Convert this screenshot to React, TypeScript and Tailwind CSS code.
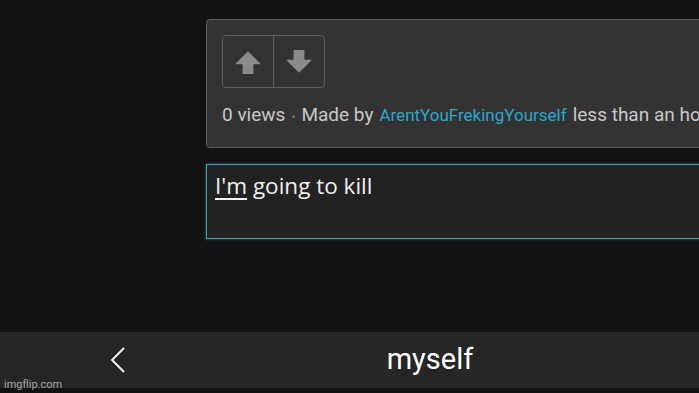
export default function App() {
  return (
    <div className="relative flex h-[393px] w-[699px] flex-col overflow-hidden bg-[#121212] font-['Roboto',sans-serif]">
      <div className="flex flex-col pl-[206px] pt-[19px]">
        {/* post meta card */}
        <div className="h-[129px] w-[540px] shrink-0 overflow-hidden rounded-[4px] border border-[#5b5b5b] bg-[#333333] pl-[15px] pt-[15px]">
          <div className="flex h-[53px] w-[103px] rounded-[4px] border border-[#5e5e5e]">
            <div className="flex w-[51px] items-center justify-center border-r border-[#5e5e5e]">
              <svg width="26" height="26" viewBox="0 0 24 24">
                <path d="M12 2 L24 14 H17 V23 H7 V14 H0 Z" fill="#8a8a8a" />
              </svg>
            </div>
            <div className="flex flex-1 items-center justify-center">
              <svg width="26" height="26" viewBox="0 0 24 24">
                <path d="M12 22 L24 10 H17 V1 H7 V10 H0 Z" fill="#8a8a8a" />
              </svg>
            </div>
          </div>
          <div className="mt-[13px] flex items-baseline whitespace-nowrap text-[19px] text-[#c8c8c8]">
            <span>0 views</span>
            <span className="mx-[6px] text-[12px] text-[#777]">•</span>
            <span>Made by</span>
            <span className="ml-[6px] text-[17px] text-[#2ea7c9]">ArentYouFrekingYourself</span>
            <span className="ml-[6px]">less than an hour ago</span>
          </div>
        </div>

        {/* caption input */}
        <div className="mt-[16px] h-[75px] w-[540px] shrink-0 border border-[#4aa2b8] bg-[#222222] pl-[8px] pt-[6px] font-['Open_Sans',sans-serif] text-[22.5px] leading-[30px] text-[#f0f0f0] shadow-[0_0_3px_rgba(74,162,184,0.5)]">
          <span className="underline decoration-[2px] underline-offset-[4px]">I'm</span> going to kill
        </div>
      </div>

      <div className="flex-1" />

      {/* bottom bar */}
      <div className="mb-[5px] flex h-[56px] shrink-0 items-center bg-[#262626]">
        <div className="flex w-[140px] shrink-0 justify-end pr-[14px]">
          <svg width="16" height="28" viewBox="0 0 16 28">
            <polyline points="14,2 2,14 14,26" fill="none" stroke="#ffffff" strokeWidth="1.8" />
          </svg>
        </div>
        <div className="flex w-[580px] shrink-0 justify-center text-[29px] text-white">myself</div>
      </div>

      <div className="absolute bottom-[3px] left-[4px] text-[11px] leading-none text-[#a8a8a8]">imgflip.com</div>
    </div>
  );
}
